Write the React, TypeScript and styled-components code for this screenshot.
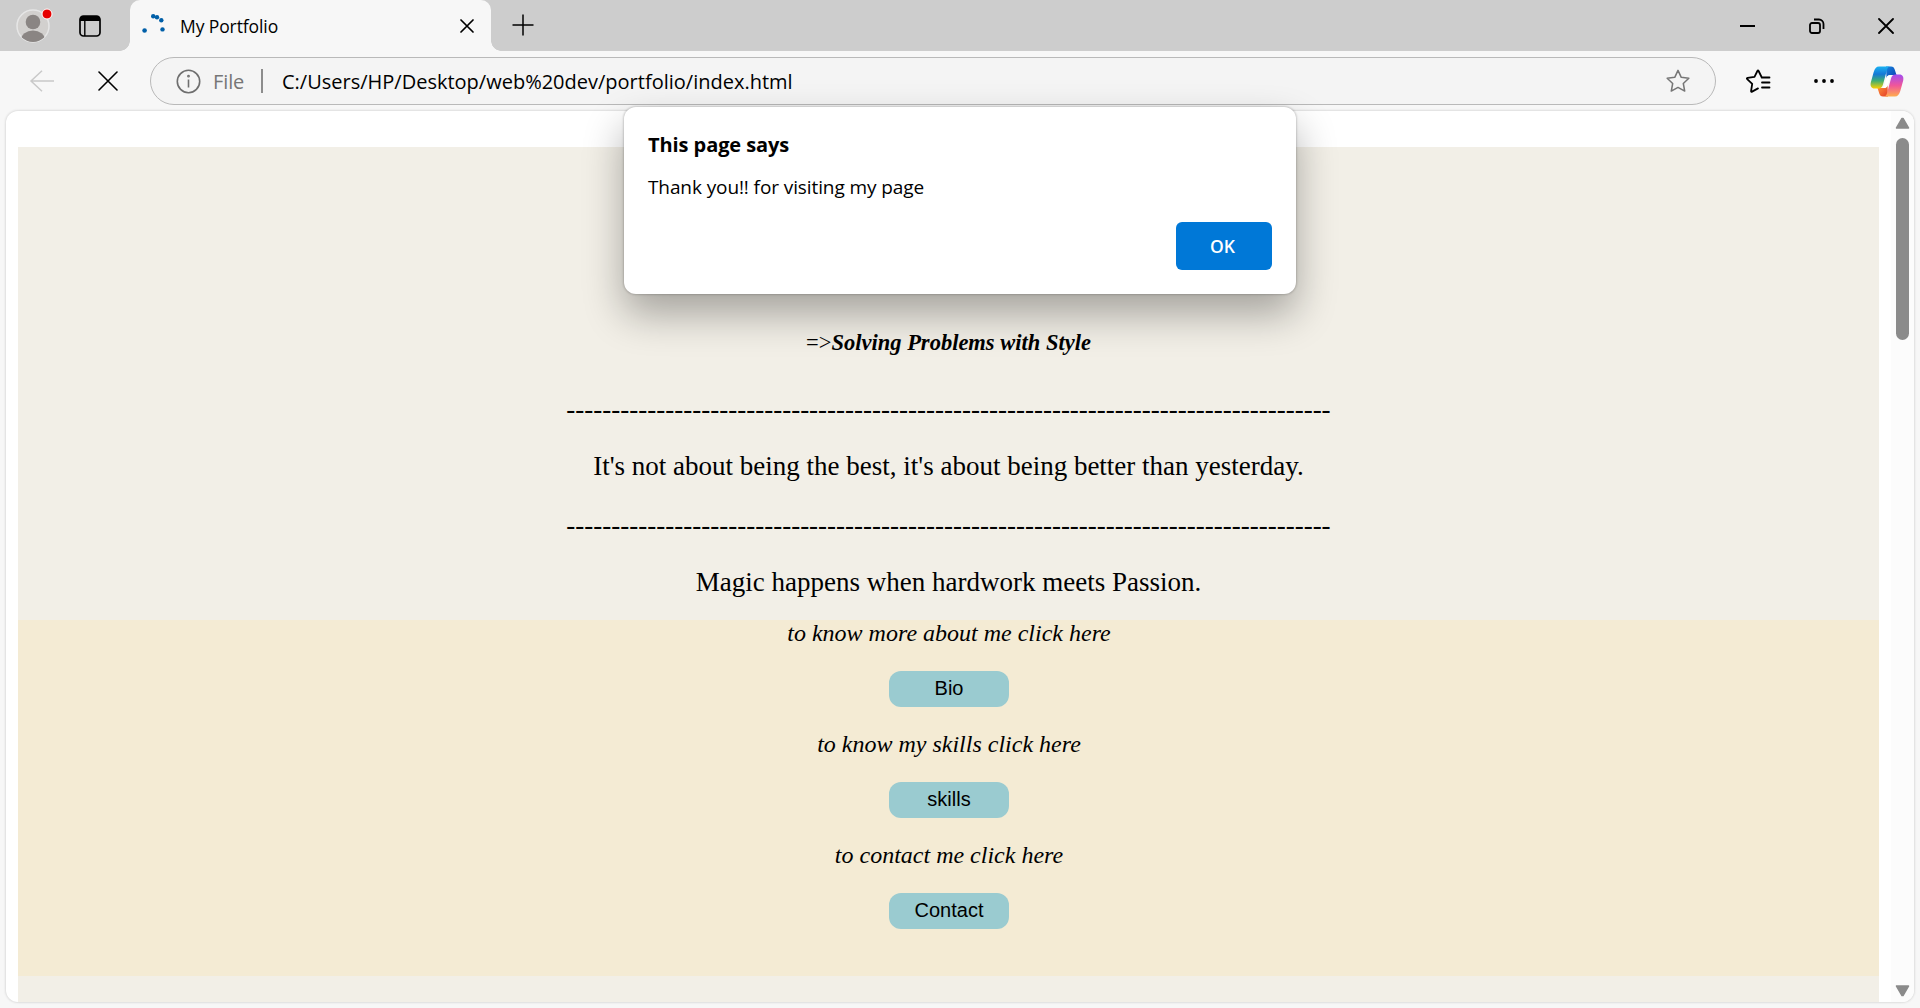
import React from "react";
import styled, { createGlobalStyle } from "styled-components";

const ui = `"Open Sans", "Noto Sans", sans-serif`;
const serif = `"Liberation Serif", "Times New Roman", serif`;

const Global = createGlobalStyle`
  *, *::before, *::after { box-sizing: border-box; }
  html, body { margin: 0; padding: 0; overflow: hidden; background: #f7f7f7; }
`;

const Window = styled.div`
  position: relative;
  display: flex;
  flex-direction: column;
  width: 1920px;
  height: 1008px;
  background: #f7f7f7;
  overflow: hidden;
  color: #000;
`;

const TitleBar = styled.header`
  display: flex;
  align-items: stretch;
  height: 51px;
  flex: none;
  background: #cdcdcd;
`;

const ProfileArea = styled.div`
  display: flex;
  align-items: flex-start;
  width: 130px;
  padding: 6px 0 0 14px;
  gap: 25px;
`;

const Tab = styled.div`
  position: relative;
  display: flex;
  align-items: center;
  width: 361px;
  padding: 0 17px 0 10px;
  border-radius: 10px 10px 0 0;
  background: #f7f7f7;
  &::before, &::after {
    content: "";
    position: absolute;
    bottom: 0;
    width: 10px;
    height: 10px;
  }
  &::before {
    left: -10px;
    background: radial-gradient(circle at 0 0, transparent 9.5px, #f7f7f7 10px);
  }
  &::after {
    right: -10px;
    background: radial-gradient(circle at 100% 0, transparent 9.5px, #f7f7f7 10px);
  }
`;

const TabTitle = styled.span`
  flex: 1;
  margin-left: 14px;
  font: 400 17.5px/24px ${ui};
  letter-spacing: -0.1px;
`;

const NewTab = styled.div`
  display: flex;
  align-items: center;
  margin-left: 21px;
  padding-bottom: 2px;
`;

const WindowButtons = styled.div`
  display: flex;
  align-items: center;
  margin-left: auto;
`;

const WindowButton = styled.div`
  display: flex;
  align-items: center;
  justify-content: center;
  width: 69px;
`;

const Toolbar = styled.div`
  display: flex;
  align-items: center;
  height: 60px;
  flex: none;
  padding: 0 16px 0 28px;
`;

const NavIcon = styled.div<{ $w: number; $gap?: number }>`
  display: flex;
  justify-content: center;
  width: ${(p) => p.$w}px;
  margin-left: ${(p) => p.$gap ?? 0}px;
`;

const AddressBar = styled.div`
  display: flex;
  align-items: center;
  width: 1567px;
  height: 48px;
  margin-left: 31px;
  padding: 0 24px 0 25px;
  border: 1px solid #b9b9b9;
  border-radius: 24px;
  background: #f4f4f4;
`;

const Scheme = styled.span`
  margin-left: 12px;
  width: 48px;
  font: 400 20px/28px ${ui};
  letter-spacing: -0.1px;
  padding-top: 1px;
  color: #767676;
`;

const Separator = styled.i`
  width: 2px;
  height: 24px;
  background: #8c8c8c;
`;

const Url = styled.span`
  flex: 1;
  margin-left: 19px;
  padding-top: 1px;
  font: 400 20px/28px ${ui};
  white-space: nowrap;
`;

const Viewport = styled.main`
  display: flex;
  width: 1908px;
  height: 891px;
  margin-left: 6px;
  border-radius: 12px;
  background: #fff;
  overflow: hidden;
  box-shadow: 0 0 2px 1px #dedede;
`;

const Page = styled.div`
  flex: 1;
  padding: 36px 12px 0;
  font-family: ${serif};
  text-align: center;
`;

const Hero = styled.section`
  display: flex;
  flex-direction: column;
  align-items: center;
  height: 473px;
  padding-top: 182px;
  background: #f2efe7;
`;

const Slogan = styled.div`
  font: 400 22.5px/28px ${serif};
  margin-bottom: 37px;
`;

const Strong = styled.b`
  font-style: italic;
`;

const Rule = styled.p`
  margin: 0 0 26px;
  font: 400 27px/31px ${serif};
  white-space: nowrap;
`;

const Quote = styled(Rule)`
  margin-bottom: 28px;
`;

const Links = styled.section`
  display: flex;
  flex-direction: column;
  align-items: stretch;
  height: 356px;
  background: #f4ebd4;
`;

const LinkRow = styled.div`
  display: flex;
  flex-direction: column;
  align-items: center;
  height: 111px;
  padding-left: 1px;
`;

const Prompt = styled.em`
  font: italic 400 24px/26px ${serif};
  margin-bottom: 25px;
  white-space: nowrap;
`;

const PageButton = styled.button`
  width: 120px;
  height: 36px;
  padding: 0 0 2px;
  border: 0;
  border-radius: 12px;
  background: #9acbd0;
  color: #000;
  font: 400 20px/23px "Liberation Sans", Arial, sans-serif;
`;

const Footer = styled.section`
  height: 26px;
  background: #f2efe7;
`;

const Scrollbar = styled.div`
  display: flex;
  flex-direction: column;
  align-items: center;
  justify-content: space-between;
  width: 23px;
  padding: 6px 0 5px;
  background: #fcfcfc;
`;

const Thumb = styled.div`
  width: 13px;
  height: 202px;
  margin: 9px 0 auto;
  border-radius: 7px;
  background: #8b8b8b;
`;

const Dialog = styled.div`
  position: absolute;
  top: 107px;
  left: 624px;
  display: flex;
  flex-direction: column;
  width: 672px;
  height: 187px;
  padding: 24px 24px;
  border-radius: 12px;
  background: #fff;
  box-shadow: 0 0 2px 1px rgba(0, 0, 0, 0.16), 0 20px 40px rgba(0, 0, 0, 0.32);
`;

const DialogTitle = styled.h1`
  margin: 0 0 15px;
  font: 700 20px/28px ${ui};
  letter-spacing: -0.08px;
`;

const DialogText = styled.p`
  margin: 0;
  font: 400 19px/26px ${ui};
  letter-spacing: -0.1px;
`;

const OkButton = styled.button`
  align-self: flex-end;
  width: 96px;
  height: 48px;
  margin-top: auto;
  padding: 0 3px 0 0;
  border: 0;
  border-radius: 6px;
  background: #0078d7;
  color: #fff;
  font: 600 17.5px/24px ${ui};
`;

const STAR = "M12 2.2 15 8.6 22 9.5 16.9 14.3 18.2 21.3 12 17.9 5.8 21.3 7.1 14.3 2 9.5 9 8.6Z";
const RULE = "-".repeat(85);
const LINKS = [
  { prompt: "to know more about me click here", label: "Bio" },
  { prompt: "to know my skills click here", label: "skills" },
  { prompt: "to contact me click here", label: "Contact" },
];

const Avatar = () => (
  <svg width="40" height="40" viewBox="0 0 40 40">
    <defs><clipPath id="av"><circle cx="19" cy="20" r="16" /></clipPath></defs>
    <circle cx="19" cy="20" r="16" fill="#d2d0ce" stroke="#e6e6e6" strokeWidth="1.5" />
    <circle cx="19" cy="16" r="7.3" fill="#8a8583" />
    <ellipse cx="19" cy="34" rx="12" ry="9.5" fill="#8a8583" clipPath="url(#av)" />
    <circle cx="33" cy="8" r="5" fill="#e60000" stroke="#fff" strokeWidth="1" />
  </svg>
);

const TabsSvg = styled.svg`
  margin-top: 8px;
`;

const TabsIcon = () => (
  <TabsSvg width="22" height="24" viewBox="0 0 22 24">
    <rect x="1" y="2" width="20" height="20" rx="3.5" fill="none" stroke="#000" strokeWidth="1.7" />
    <path d="M1 7V5a3 3 0 0 1 3-3h14a3 3 0 0 1 3 3v2Z" />
    <path d="M5.8 7v15" stroke="#000" strokeWidth="1.4" />
  </TabsSvg>
);

const Spinner = () => (
  <svg width="26" height="26" viewBox="0 0 26 26" fill="#005fa8">
    <circle cx="4.600" cy="17.500" r="2.300" /><circle cx="13.200" cy="3.300" r="2.200" />
    <circle cx="17" cy="4.200" r="2.200" /><circle cx="21.300" cy="7.300" r="2.200" /><circle cx="22.500" cy="16.400" r="2.200" />
  </svg>
);

const Cross = ({ size, weight }: { size: number; weight: number }) => (
  <svg width={size} height={size} viewBox={`0 0 ${size} ${size}`} stroke="#000" strokeWidth={weight} strokeLinecap="round">
    <path d={`M1 1 ${size - 1} ${size - 1}M${size - 1} 1 1 ${size - 1}`} />
  </svg>
);

const Copilot = () => (
  <svg width="34" height="31" viewBox="0 0 34 31">
    <defs>
      <linearGradient id="c1" x1="0" y1="0" x2="0" y2="1"><stop offset="0" stopColor="#1bb2f2" /><stop offset=".35" stopColor="#1578d6" /><stop offset=".65" stopColor="#3fae72" /><stop offset="1" stopColor="#fbd000" /></linearGradient>
      <linearGradient id="c2" x1="0" y1="0" x2="0" y2="1"><stop offset="0" stopColor="#a24cf0" /><stop offset=".5" stopColor="#f0569a" /><stop offset="1" stopColor="#ffad4d" /></linearGradient>
      <linearGradient id="c3" x1="0" y1="0" x2="1" y2="1"><stop offset="0" stopColor="#1686e0" /><stop offset="1" stopColor="#0b3cae" /></linearGradient>
      <linearGradient id="c4" x1="0" y1="0" x2="1" y2="1"><stop offset="0" stopColor="#ff9a3c" /><stop offset="1" stopColor="#e43b28" /></linearGradient>
    </defs>
    <path d="M16 .5h5c2.300 0 3 1 3.700 3L26.500 9h-5.500c-2.500 0-3.500 1-4.500 3Z" fill="url(#c3)" />
    <path d="M18 30.500h-5c-2.300 0-3-1-3.700-3L7.500 22H13c2.500 0 3.500-1 4.500-3Z" fill="url(#c4)" />
    <path d="M9 .5h11.500c-2.200 0-3 1.500-3.700 4L13 18.500c-.8 2.600-2 4-4.500 4h-4C1.500 22.500 0 20 .8 16.500L3.700 6C4.700 2.500 6.300.5 9 .5Z" fill="url(#c1)" />
    <path d="M25 30.500H13.500c2.200 0 3-1.500 3.700-4L21 12.500c.8-2.600 2-4 4.500-4h4c3 0 4.500 2.500 3.700 6L30.300 25c-1 3.500-2.600 5.500-5.300 5.500Z" fill="url(#c2)" />
    <path d="M18.800 9.300c-1.500.4-2 1.500-2.500 3.200l-1.500 5.500c-.5 1.800-1.200 3.200-2.500 4h3c1.500-.4 2.200-1.500 2.700-3.200l1.500-5.500c.5-1.800 1.200-3.200 2.500-4Z" fill="#fff" />
  </svg>
);

const Arrow = ({ down }: { down?: boolean }) => (
  <svg width="15" height="12" viewBox="0 0 15 12">
    <path
      d={down ? "M1.500 1h12L8 10.500H7Z" : "M1.500 11h12L8 1.500H7Z"}
      fill="#8b8b8b" stroke="#8b8b8b" strokeWidth="1.500" strokeLinejoin="round"
    />
  </svg>
);

export default function App() {
  return (
    <Window>
      <Global />
      <TitleBar>
        <ProfileArea><Avatar /><TabsIcon /></ProfileArea>
        <Tab><Spinner /><TabTitle>My Portfolio</TabTitle><Cross size={14} weight={1.7} /></Tab>
        <NewTab>
          <svg width="22" height="22" viewBox="0 0 22 22" stroke="#000" strokeWidth="1.500"><path d="M11 .5v21M.5 11h21" /></svg>
        </NewTab>
        <WindowButtons>
          <WindowButton><svg width="16" height="16"><path d="M0 8h15" stroke="#000" strokeWidth="2" /></svg></WindowButton>
          <WindowButton>
            <svg width="16" height="16" viewBox="0 0 16 16" fill="none" stroke="#000" strokeWidth="1.800">
              <rect x="1" y="5" width="10" height="10" rx="2" />
              <path d="M5 1.500h5a4.500 4.500 0 0 1 4.500 4.500v5" />
            </svg>
          </WindowButton>
          <WindowButton><Cross size={16} weight={1.8} /></WindowButton>
        </WindowButtons>
      </TitleBar>
      <Toolbar>
        <NavIcon $w={28}>
          <svg width="26" height="22" viewBox="0 0 26 22" fill="none" stroke="#c9c9c9" strokeWidth="1.500"><path d="M25 11H2M13 .8 2 11l11 10.200" /></svg>
        </NavIcon>
        <NavIcon $w={20} $gap={42}><Cross size={20} weight={1.6} /></NavIcon>
        <NavIcon $w={1}/>
        <AddressBar>
          <svg width="25" height="25" viewBox="0 0 25 25" fill="none" stroke="#6e6e6e" strokeWidth="1.600">
            <circle cx="12.500" cy="12.500" r="11.200" /><path d="M12.500 10.500v8" /><circle cx="12.500" cy="7.200" r=".6" />
          </svg>
          <Scheme>File</Scheme>
          <Separator />
          <Url>C:/Users/HP/Desktop/web%20dev/portfolio/index.html</Url>
          <svg width="26" height="26" viewBox="0 0 24 24" fill="none" stroke="#767676" strokeWidth="1.400" strokeLinejoin="round"><path d={STAR} /></svg>
        </AddressBar>
        <NavIcon $w={26} $gap={29}>
          <svg width="26" height="26" viewBox="0 0 26 26" fill="none" stroke="#000" strokeWidth="1.800" strokeLinejoin="round" strokeLinecap="round">
            <path d="M24.500 9.500H16.800L13.600 3Q13 1.800 12.400 3L9.500 8.800 2.600 9.800Q1.300 10.100 2.200 11.100L7.200 15.900 6.100 23Q6 24.200 7.100 23.600L13 20.400M17 14.500h7.500M17 19.500h7.500" />
          </svg>
        </NavIcon>
        <NavIcon $w={22} $gap={42}>
          <svg width="22" height="6"><circle cx="3" cy="3" r="1.900" /><circle cx="11" cy="3" r="1.900" /><circle cx="19" cy="3" r="1.900" /></svg>
        </NavIcon>
        <NavIcon $w={34} $gap={35}><Copilot /></NavIcon>
      </Toolbar>
      <Viewport>
        <Page>
          <Hero>
            <Slogan>=&gt;<Strong>Solving Problems with Style</Strong></Slogan>
            <Rule>{RULE}</Rule>
            <Quote>It's not about being the best, it's about being better than yesterday.</Quote>
            <Rule>{RULE}</Rule>
            <Quote>Magic happens when hardwork meets Passion.</Quote>
          </Hero>
          <Links>
            {LINKS.map((l) => (
              <LinkRow key={l.label}><Prompt>{l.prompt}</Prompt><PageButton>{l.label}</PageButton></LinkRow>
            ))}
          </Links>
          <Footer />
        </Page>
        <Scrollbar><Arrow /><Thumb /><Arrow down /></Scrollbar>
      </Viewport>
      <Dialog role="dialog">
        <DialogTitle>This page says</DialogTitle>
        <DialogText>Thank you!! for visiting my page</DialogText>
        <OkButton>OK</OkButton>
      </Dialog>
    </Window>
  );
}
